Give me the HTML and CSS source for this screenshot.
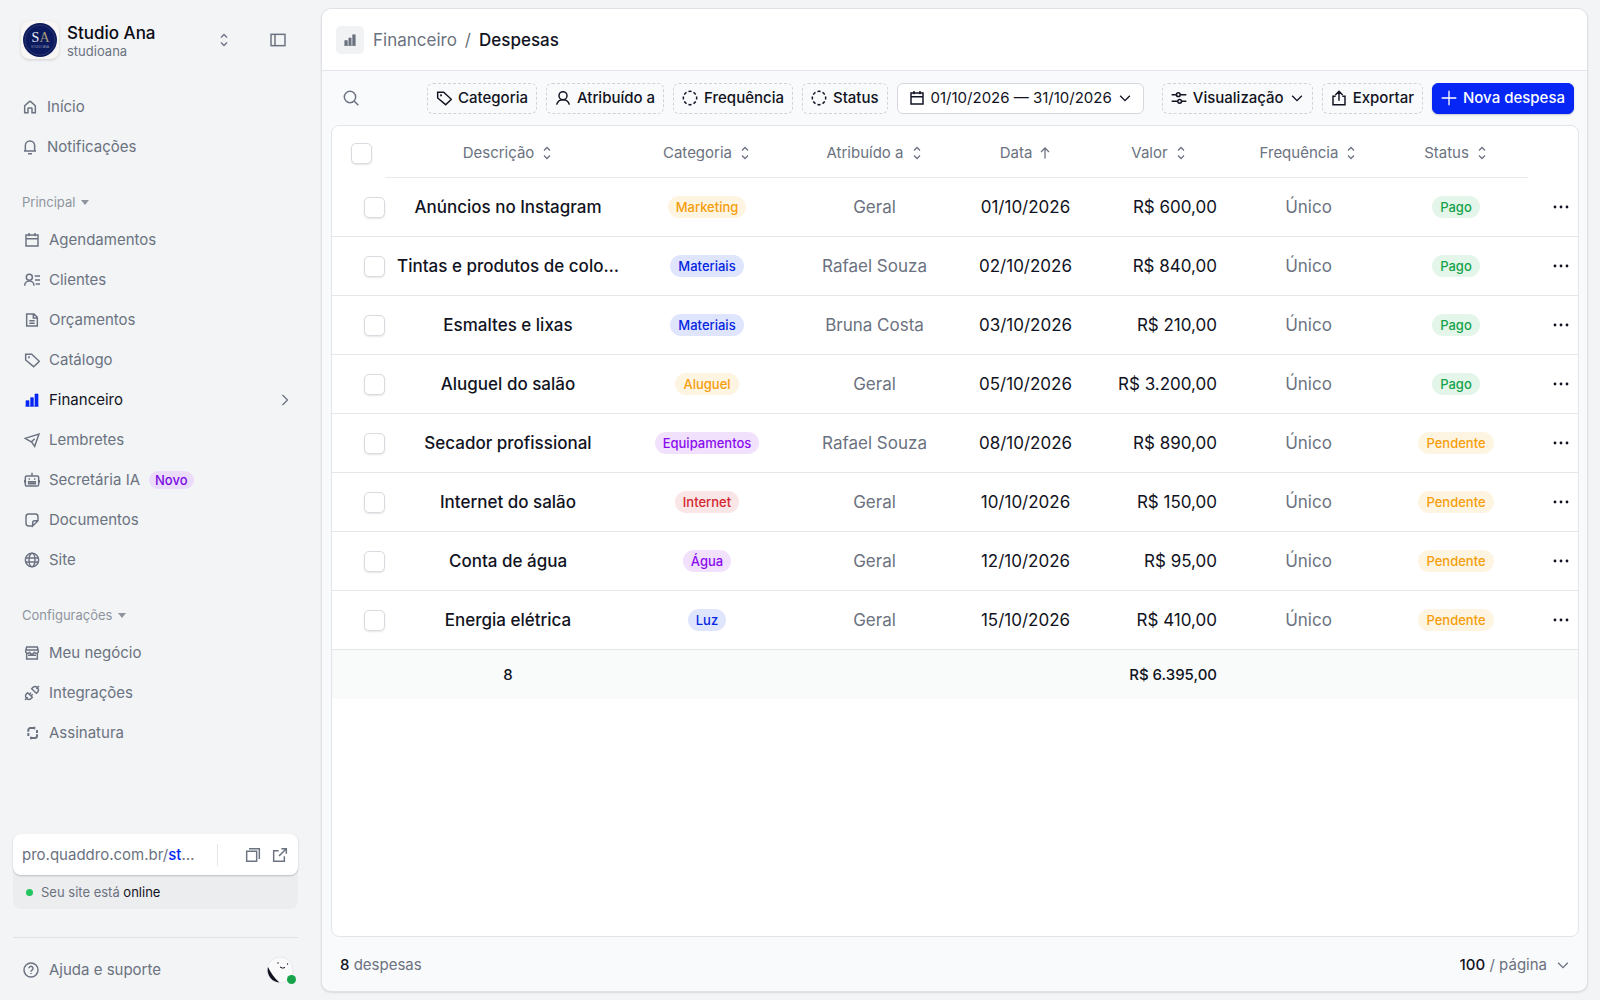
FILE: index.html
```html
<!DOCTYPE html>
<html lang="pt-BR">

<head>
  <meta charset="UTF-8" />
  <meta name="viewport" content="width=device-width, initial-scale=1" />
  <title>Despesas - Studio Ana</title>
  <link rel="stylesheet" href="styles.css">
</head>

<body>
  <svg class="sprite" aria-hidden="true">
    <symbol id="i-home" viewBox="0 0 24 24"><path d="M4 20.5V10.2l7-6.3q1-.9 2 0l7 6.3v10.3h-5V14.5a1 1 0 0 0-1-1h-4a1 1 0 0 0-1 1v6z" /></symbol>
    <symbol id="i-bell" viewBox="0 0 24 24"><path d="M3 18h18M5 18v-8a7 7 0 0 1 14 0v8M9 22h6" /></symbol>
    <symbol id="i-calendar" viewBox="0 0 24 24"><path d="M3 4.5h18V21H3zM3 10h18M7.5 1.5v5M16.5 1.5v5" /></symbol>
    <symbol id="i-contacts" viewBox="0 0 24 24"><circle cx="8" cy="8" r="4.5" /><path d="M1 20.5c0-4 3-7 7-7s7 3 7 7M16 6h8M16.500 12H24M17.500 18H24" /></symbol>
    <symbol id="i-file" viewBox="0 0 24 24"><path d="M4 3h11l5 5v13H4zM14 3v6h6M8 13h8M8 17h8" /></symbol>
    <symbol id="i-tag" viewBox="0 0 24 24"><path d="M2.500 3.500h9L23 14l-8.500 8L2.500 12z" /><circle cx="7.500" cy="8" r=".6" /></symbol>
    <symbol id="i-bars" viewBox="0 0 24 24"><path d="M2 21.500h20M3 21V13h4.500v8zM10 21V8.500h4V21zM16.500 21V3H21v18z" fill="currentColor" stroke-width="1" /></symbol>
    <symbol id="i-send" viewBox="0 0 24 24"><path d="M1.500 9.500 22.500 3l-6.500 18.500-4.500-6.500zM11 15l5-5" /></symbol>
    <symbol id="i-bot" viewBox="0 0 24 24"><rect x="2" y="6" width="20" height="15" rx="2" /><path d="M12 1v5M7 14.500h10v3H7zM0.800 12v4M23.200 12v4M10.500 15v2M13.500 15v2" /><path d="M8 9.500v2M16 9.500v2" /></symbol>
    <symbol id="i-note" viewBox="0 0 24 24"><path d="M13 21H7a4 4 0 0 1-4-4V7a4 4 0 0 1 4-4h10a4 4 0 0 1 4 4v6l-8 8v-5a3 3 0 0 1 3-3h5" /></symbol>
    <symbol id="i-globe" viewBox="0 0 24 24"><circle cx="12" cy="12" r="10" /><ellipse cx="12" cy="12" rx="4.500" ry="10" /><path d="M2.500 9h19M2.500 15h19" /></symbol>
    <symbol id="i-store" viewBox="0 0 24 24"><path d="M4 11v10h16V11M4 3h16l1.500 6a3 3 0 0 1-6 1 3.500 3.500 0 0 1-7 0 3 3 0 0 1-6-1zM3 7.500h18M6 15.500h12" /></symbol>
    <symbol id="i-plug" viewBox="0 0 24 24"><path d="M1.500 22.500l4-4M5.500 11.500l7 7-2 2a5 5 0 0 1-7-7zM22.500 1.500l-4 4M11.500 5.500l7 7 2-2a5 5 0 0 0-7-7zM8 14l2.500-2.500M10.500 16.500l2.500-2.500" /></symbol>
    <symbol id="i-loop" viewBox="0 0 24 24"><path d="M6.500 10V7.500a3 3 0 0 1 3-3H17M19.500 14v2.500a3 3 0 0 1-3 3H9M6.500 12v4.500M19.500 12V7.500M15.500 2.500v4M10.500 17.500v4" stroke-width="3" /></symbol>
    <symbol id="i-panel" viewBox="0 0 24 24"><rect x="1.500" y="3.500" width="21" height="17" /><path d="M7.500 3.500v17" /></symbol>
    <symbol id="i-sort" viewBox="0 0 12 16"><path d="M3 5.500l3-3 3 3M3 10.500l3 3 3-3" /></symbol>
    <symbol id="i-up" viewBox="0 0 12 16"><path d="M6 13.500V3M2 7l4-4 4 4" /></symbol>
    <symbol id="i-right" viewBox="0 0 12 16"><path d="M3.500 3l5 5-5 5" /></symbol>
    <symbol id="i-down" viewBox="0 0 16 16"><path d="M2.500 5.500 8 11l5.500-5.500" /></symbol>
    <symbol id="i-copy" viewBox="0 0 24 24"><path d="M2.500 6.500h15v15h-15zM6 2.500h15.500V18" /></symbol>
    <symbol id="i-external" viewBox="0 0 24 24"><path d="M10 5.500H2.500v16h16V14M14 2.500h7.500V10M21 3l-10.500 10.500" /></symbol>
    <symbol id="i-help" viewBox="0 0 24 24"><circle cx="12" cy="12" r="10.500" /><path d="M9 9.500a3 3 0 1 1 4.500 2.600c-1 .6-1.500 1.100-1.500 2.400M12 16.500v1.500" /></symbol>
    <symbol id="i-search" viewBox="0 0 24 24"><circle cx="10.500" cy="10.500" r="8.500" /><path d="M17 17l6 6" /></symbol>
    <symbol id="i-user" viewBox="0 0 24 24"><circle cx="12" cy="8.500" r="6" /><path d="M2.500 22c1-4.500 5-7.500 9.500-7.500s8.500 3 9.500 7.500" /></symbol>
    <symbol id="i-dashed" viewBox="0 0 24 24"><circle cx="12" cy="12" r="10" pathLength="80" stroke-dasharray="6 4" stroke-dashoffset="3" /></symbol>
    <symbol id="i-sliders" viewBox="0 0 24 24"><path d="M1 7h7M14 7h9M1 17h9M16 17h7" /><circle cx="11" cy="7" r="2.800" /><circle cx="13" cy="17" r="2.800" /></symbol>
    <symbol id="i-share" viewBox="0 0 24 24"><path d="M7 9.500H3V22h18V9.500h-4M12 16V2.500M6.500 7.500 12 2l5.500 5.500" /></symbol>
    <symbol id="i-plus" viewBox="0 0 24 24"><path d="M12 1v22M1 12h22" /></symbol>
    <symbol id="i-dots" viewBox="0 0 16 16"><g fill="currentColor" stroke="none"><circle cx="2" cy="8" r="1.400" /><circle cx="8" cy="8" r="1.400" /><circle cx="14" cy="8" r="1.400" /></g></symbol>
  </svg>

  <div class="app">
    <aside class="sidebar">
      <div class="brand">
        <div class="brand-logo">
          <svg viewBox="0 0 36 36" aria-hidden="true">
            <circle cx="18" cy="18" r="17" fill="#0b1a5e" />
            <circle cx="18" cy="18" r="15" fill="none" stroke="#3c4670" stroke-width=".6" />
            <text x="13.500" y="20" class="logo-s">S</text>
            <text x="22.500" y="20" class="logo-a">A</text>
            <text x="18" y="26" class="logo-tag">STUDIO ANA</text>
          </svg>
        </div>
        <div class="brand-text">
          <div class="brand-name">Studio Ana</div>
          <div class="brand-user">studioana</div>
        </div>
        <button type="button" class="plain" aria-label="Trocar negócio"><svg class="icon sort"><use href="#i-sort" /></svg></button>
        <button type="button" class="plain collapse" aria-label="Recolher menu"><svg class="icon"><use href="#i-panel" /></svg></button>
      </div>

      <nav class="menu top">
        <a href="#"><svg class="icon"><use href="#i-home" /></svg>Início</a>
        <a href="#"><svg class="icon"><use href="#i-bell" /></svg>Notificações</a>
      </nav>

      <button type="button" class="group">Principal <span class="caret"></span></button>
      <nav class="menu">
        <a href="#"><svg class="icon"><use href="#i-calendar" /></svg>Agendamentos</a>
        <a href="#"><svg class="icon"><use href="#i-contacts" /></svg>Clientes</a>
        <a href="#"><svg class="icon"><use href="#i-file" /></svg>Orçamentos</a>
        <a href="#"><svg class="icon"><use href="#i-tag" /></svg>Catálogo</a>
        <a href="#" class="active"><svg class="icon"><use href="#i-bars" /></svg>Financeiro<svg class="icon sort chevron"><use href="#i-right" /></svg></a>
        <a href="#"><svg class="icon"><use href="#i-send" /></svg>Lembretes</a>
        <a href="#"><svg class="icon"><use href="#i-bot" /></svg>Secretária IA<span class="new">Novo</span></a>
        <a href="#"><svg class="icon"><use href="#i-note" /></svg>Documentos</a>
        <a href="#"><svg class="icon"><use href="#i-globe" /></svg>Site</a>
      </nav>

      <button type="button" class="group">Configurações <span class="caret"></span></button>
      <nav class="menu">
        <a href="#"><svg class="icon"><use href="#i-store" /></svg>Meu negócio</a>
        <a href="#"><svg class="icon"><use href="#i-plug" /></svg>Integrações</a>
        <a href="#"><svg class="icon"><use href="#i-loop" /></svg>Assinatura</a>
      </nav>

      <div class="site">
        <div class="site-url">
          <a href="#">pro.quaddro.com.br/<span>st</span>…</a>
          <span class="sep"></span>
          <button type="button" class="plain" aria-label="Copiar link"><svg class="icon"><use href="#i-copy" /></svg></button>
          <button type="button" class="plain" aria-label="Abrir site"><svg class="icon"><use href="#i-external" /></svg></button>
        </div>
        <div class="site-status"><span class="dot"></span><span>Seu site está <b>online</b></span></div>
      </div>

      <div class="help">
        <a href="#"><svg class="icon"><use href="#i-help" /></svg>Ajuda e suporte</a>
        <button type="button" class="plain avatar" aria-label="Minha conta">
          <svg viewBox="0 0 28 28" aria-hidden="true">
            <circle cx="14" cy="14" r="13" fill="#fafafa" stroke="#e8e9ec" />
            <path d="M2 11a12.500 12.500 0 0 0 11.500 15.500C8.500 22.500 5 17 2 11z" fill="#10121f" />
            <path d="M14 11q2.500 2 5 .5" fill="none" stroke="#10121f" />
            <circle cx="12" cy="7" r=".7" fill="#10121f" />
            <circle cx="21.500" cy="8" r=".7" fill="#10121f" />
          </svg>
          <span class="presence"></span>
        </button>
      </div>
    </aside>

    <main class="main">
      <header class="header">
        <span class="header-icon"><svg class="icon"><use href="#i-bars" /></svg></span>
        <a href="#">Financeiro</a>
        <span class="slash">/</span>
        <h1>Despesas</h1>
      </header>

      <div class="toolbar">
        <button type="button" class="plain search" aria-label="Buscar"><svg class="icon"><use href="#i-search" /></svg></button>
        <div class="filters">
          <button type="button" class="btn"><svg class="icon"><use href="#i-tag" /></svg>Categoria</button>
          <button type="button" class="btn"><svg class="icon"><use href="#i-user" /></svg>Atribuído a</button>
          <button type="button" class="btn"><svg class="icon"><use href="#i-dashed" /></svg>Frequência</button>
          <button type="button" class="btn"><svg class="icon"><use href="#i-dashed" /></svg>Status</button>
          <button type="button" class="btn period"><svg class="icon"><use href="#i-calendar" /></svg>01/10/2026 — 31/10/2026<svg class="icon small"><use href="#i-down" /></svg></button>
        </div>
        <div class="actions">
          <button type="button" class="btn"><svg class="icon"><use href="#i-sliders" /></svg>Visualização<svg class="icon small"><use href="#i-down" /></svg></button>
          <button type="button" class="btn"><svg class="icon"><use href="#i-share" /></svg>Exportar</button>
          <button type="button" class="btn primary"><svg class="icon"><use href="#i-plus" /></svg>Nova despesa</button>
        </div>
      </div>

      <div class="card">
        <table>
          <colgroup>
            <col class="c-check">
            <col>
            <col class="c-category">
            <col class="c-assigned">
            <col class="c-date">
            <col class="c-value">
            <col class="c-freq">
            <col class="c-status">
            <col class="c-more">
          </colgroup>
          <thead>
            <tr>
              <th class="check"><input type="checkbox" aria-label="Selecionar todas"></th>
              <th>Descrição<svg class="icon sort"><use href="#i-sort" /></svg></th>
              <th>Categoria<svg class="icon sort"><use href="#i-sort" /></svg></th>
              <th>Atribuído a<svg class="icon sort"><use href="#i-sort" /></svg></th>
              <th>Data<svg class="icon sort"><use href="#i-up" /></svg></th>
              <th>Valor<svg class="icon sort"><use href="#i-sort" /></svg></th>
              <th>Frequência<svg class="icon sort"><use href="#i-sort" /></svg></th>
              <th>Status<svg class="icon sort"><use href="#i-sort" /></svg></th>
              <th></th>
            </tr>
          </thead>
          <tbody>
            <tr>
              <td class="check"><input type="checkbox" aria-label="Anúncios no Instagram"></td>
              <td class="name">Anúncios no Instagram</td>
              <td><span class="pill orange">Marketing</span></td>
              <td class="muted">Geral</td>
              <td>01/10/2026</td>
              <td class="value">R$ 600,00</td>
              <td class="muted">Único</td>
              <td><span class="pill green">Pago</span></td>
              <td class="more"><button type="button" class="plain" aria-label="Mais opções"><svg class="icon"><use href="#i-dots" /></svg></button></td>
            </tr>
            <tr>
              <td class="check"><input type="checkbox" aria-label="Tintas e produtos"></td>
              <td class="name">Tintas e produtos de colo…</td>
              <td><span class="pill blue">Materiais</span></td>
              <td class="muted">Rafael Souza</td>
              <td>02/10/2026</td>
              <td class="value">R$ 840,00</td>
              <td class="muted">Único</td>
              <td><span class="pill green">Pago</span></td>
              <td class="more"><button type="button" class="plain" aria-label="Mais opções"><svg class="icon"><use href="#i-dots" /></svg></button></td>
            </tr>
            <tr>
              <td class="check"><input type="checkbox" aria-label="Esmaltes e lixas"></td>
              <td class="name">Esmaltes e lixas</td>
              <td><span class="pill blue">Materiais</span></td>
              <td class="muted">Bruna Costa</td>
              <td>03/10/2026</td>
              <td class="value">R$ 210,00</td>
              <td class="muted">Único</td>
              <td><span class="pill green">Pago</span></td>
              <td class="more"><button type="button" class="plain" aria-label="Mais opções"><svg class="icon"><use href="#i-dots" /></svg></button></td>
            </tr>
            <tr>
              <td class="check"><input type="checkbox" aria-label="Aluguel do salão"></td>
              <td class="name">Aluguel do salão</td>
              <td><span class="pill orange">Aluguel</span></td>
              <td class="muted">Geral</td>
              <td>05/10/2026</td>
              <td class="value">R$ 3.200,00</td>
              <td class="muted">Único</td>
              <td><span class="pill green">Pago</span></td>
              <td class="more"><button type="button" class="plain" aria-label="Mais opções"><svg class="icon"><use href="#i-dots" /></svg></button></td>
            </tr>
            <tr>
              <td class="check"><input type="checkbox" aria-label="Secador profissional"></td>
              <td class="name">Secador profissional</td>
              <td><span class="pill purple">Equipamentos</span></td>
              <td class="muted">Rafael Souza</td>
              <td>08/10/2026</td>
              <td class="value">R$ 890,00</td>
              <td class="muted">Único</td>
              <td><span class="pill orange">Pendente</span></td>
              <td class="more"><button type="button" class="plain" aria-label="Mais opções"><svg class="icon"><use href="#i-dots" /></svg></button></td>
            </tr>
            <tr>
              <td class="check"><input type="checkbox" aria-label="Internet do salão"></td>
              <td class="name">Internet do salão</td>
              <td><span class="pill red">Internet</span></td>
              <td class="muted">Geral</td>
              <td>10/10/2026</td>
              <td class="value">R$ 150,00</td>
              <td class="muted">Único</td>
              <td><span class="pill orange">Pendente</span></td>
              <td class="more"><button type="button" class="plain" aria-label="Mais opções"><svg class="icon"><use href="#i-dots" /></svg></button></td>
            </tr>
            <tr>
              <td class="check"><input type="checkbox" aria-label="Conta de água"></td>
              <td class="name">Conta de água</td>
              <td><span class="pill purple">Água</span></td>
              <td class="muted">Geral</td>
              <td>12/10/2026</td>
              <td class="value">R$ 95,00</td>
              <td class="muted">Único</td>
              <td><span class="pill orange">Pendente</span></td>
              <td class="more"><button type="button" class="plain" aria-label="Mais opções"><svg class="icon"><use href="#i-dots" /></svg></button></td>
            </tr>
            <tr>
              <td class="check"><input type="checkbox" aria-label="Energia elétrica"></td>
              <td class="name">Energia elétrica</td>
              <td><span class="pill blue">Luz</span></td>
              <td class="muted">Geral</td>
              <td>15/10/2026</td>
              <td class="value">R$ 410,00</td>
              <td class="muted">Único</td>
              <td><span class="pill orange">Pendente</span></td>
              <td class="more"><button type="button" class="plain" aria-label="Mais opções"><svg class="icon"><use href="#i-dots" /></svg></button></td>
            </tr>
          </tbody>
          <tfoot>
            <tr>
              <td></td>
              <td>8</td>
              <td colspan="3"></td>
              <td class="value">R$ 6.395,00</td>
              <td colspan="3"></td>
            </tr>
          </tfoot>
        </table>
      </div>

      <footer class="footer">
        <div><b>8</b> despesas</div>
        <div class="per-page">
          <select id="per-page">
            <option>50</option>
            <option selected>100</option>
            <option>200</option>
          </select>
          <label for="per-page">/ página</label>
          <svg class="icon small"><use href="#i-down" /></svg>
        </div>
      </footer>
    </main>
  </div>
</body>

</html>
```
FILE: styles.css
```css
* {
  box-sizing: border-box;
}

body {
  margin: 0;
  background: #f2f4f6;
  color: #111322;
  font-family: Inter, "Liberation Sans", sans-serif;
  font-size: 15px;
  line-height: 20px;
}

a {
  color: inherit;
  text-decoration: none;
}

b {
  font-weight: 500;
  color: #111322;
}

button,
select {
  font: inherit;
  color: inherit;
  cursor: pointer;
}

.sprite {
  display: none;
}

.icon {
  width: 16px;
  height: 16px;
  flex: none;
  fill: none;
  stroke: currentColor;
  stroke-width: 2.2;
}

.icon.sort {
  width: 12px;
  stroke-width: 1.3;
}

.icon.small {
  width: 14px;
  height: 14px;
  stroke-width: 1.6;
}

.plain {
  display: flex;
  padding: 0;
  border: 0;
  background: none;
  color: #6b7280;
}

.app {
  display: flex;
  min-height: 100vh;
}

/* sidebar */
.sidebar {
  width: 321px;
  flex: none;
  display: flex;
  flex-direction: column;
  padding: 20px 23px 16px 13px;
  color: #6b7280;
}

.brand {
  display: flex;
  align-items: center;
  height: 40px;
  padding: 0 12px 0 8px;
}

.brand-logo {
  width: 38px;
  height: 38px;
  padding: 1px;
  border-radius: 8px;
  background: #f8f5f5;
  box-shadow: 0 1px 3px rgba(0, 0, 0, 0.15);
}

.brand-logo svg {
  display: block;
}

.logo-s,
.logo-a {
  font: 14px "Liberation Serif", serif;
  text-anchor: middle;
  fill: #e9ebf2;
}

.logo-a {
  fill: #a89d78;
}

.logo-tag {
  font: 3px "Liberation Sans", sans-serif;
  text-anchor: middle;
  fill: #8c92b0;
}

.brand-text {
  flex: 1;
  margin-left: 8px;
  padding-top: 2px;
}

.brand-name {
  font-size: 17px;
  font-weight: 500;
  line-height: 20px;
  color: #0b0b14;
}

.brand-user {
  font-size: 13px;
  line-height: 16px;
}

.collapse {
  margin-left: 40px;
}

.menu a {
  display: flex;
  align-items: center;
  gap: 9px;
  height: 40px;
  padding: 0 7px 0 11px;
}

.menu.top {
  margin-top: 27px;
}

.menu.top a {
  padding-left: 9px;
}

.menu .active {
  color: #111322;
}

.menu .active .icon {
  color: #0526f5;
}

.menu .active .chevron {
  margin-left: auto;
  color: #6b7280;
}

.new {
  height: 18px;
  padding: 0 6px;
  border-radius: 9px;
  background: #ecdcfb;
  color: #7a0be0;
  font-size: 13px;
  font-weight: 500;
  line-height: 18px;
}

.group {
  display: flex;
  align-items: center;
  gap: 6px;
  margin: 25px 0 8px;
  padding: 0 9px;
  border: 0;
  background: none;
  color: #8f949e;
  font-size: 13px;
  line-height: 20px;
}

.caret {
  border: 4px solid transparent;
  border-top: 5px solid #8f949e;
  border-bottom: 0;
}

.site {
  margin-top: auto;
  border-radius: 8px;
  background: #ecedef;
}

.site-url {
  display: flex;
  align-items: center;
  gap: 11px;
  height: 41px;
  padding: 0 10px 0 9px;
  border-radius: 8px;
  background: #fff;
  box-shadow: 0 1px 2px rgba(0, 0, 0, 0.2);
}

.site-url a {
  white-space: nowrap;
}

.site-url a span {
  color: #0526f5;
  font-weight: 500;
}

.sep {
  width: 1px;
  height: 22px;
  margin: 0 16px 0 auto;
  background: #e5e7eb;
}

.site-status {
  display: flex;
  align-items: center;
  gap: 8px;
  height: 34px;
  padding: 0 13px;
  font-size: 13px;
}

.site-status b {
  font-weight: 400;
}

.dot {
  width: 7px;
  height: 7px;
  border-radius: 50%;
  background: #22c55e;
}

.help {
  display: flex;
  align-items: center;
  justify-content: space-between;
  margin-top: 28px;
  padding: 18px 4px 0 10px;
  border-top: 1px solid #dfe1e5;
}

.help a {
  display: flex;
  align-items: center;
  gap: 10px;
}

.avatar {
  position: relative;
  width: 28px;
  height: 28px;
}

.presence {
  position: absolute;
  right: -2px;
  bottom: 0;
  width: 9px;
  height: 9px;
  border-radius: 50%;
  background: #16a34a;
}

/* main panel */
.main {
  flex: 1;
  min-width: 0;
  display: flex;
  flex-direction: column;
  margin: 8px 12px 8px 0;
  border: 1px solid #dfe1e6;
  border-radius: 10px;
  background: #f9fafc;
  box-shadow: 0 1px 2px rgba(0, 0, 0, 0.1);
}

.header {
  display: flex;
  align-items: center;
  height: 62px;
  padding: 0 14px;
  border-bottom: 1px solid #e2e5e9;
  border-radius: 10px 10px 0 0;
  background: #fff;
  color: #6b7280;
  font-size: 17px;
}

.header-icon {
  display: grid;
  place-items: center;
  width: 28px;
  height: 28px;
  margin-right: 9px;
  border-radius: 5px;
  background: #f1f2f3;
}

.header-icon .icon {
  width: 14px;
}

.slash {
  margin: 0 8px;
}

.header h1 {
  margin: 0;
  color: #111322;
  font-size: 17px;
  font-weight: 500;
}

.toolbar {
  display: flex;
  align-items: center;
  gap: 18px;
  height: 54px;
  padding: 0 13px 0 21px;
}

.filters,
.actions {
  display: flex;
  gap: 9px;
}

.filters {
  margin-left: auto;
}

.btn {
  display: flex;
  align-items: center;
  gap: 6px;
  height: 31px;
  padding: 0 8px;
  border: 1px dashed #cfd3d9;
  border-radius: 6px;
  background: none;
  font-size: 15px;
  font-weight: 500;
  white-space: nowrap;
}

.period {
  padding: 0 11px;
  border: 1px solid #d5d8dd;
  background: #fff;
  font-weight: 400;
}

.primary {
  border: 1px solid #0526f5;
  background: #0526f5;
  color: #fff;
  box-shadow: 0 1px 2px rgba(0, 0, 0, 0.2);
}

.primary .icon {
  stroke-width: 2;
}

.card {
  flex: 1;
  margin: 0 8px 0 9px;
  border: 1px solid #e2e5e9;
  border-radius: 8px;
  background: #fff;
  overflow: hidden;
}

/* table */
table {
  width: 100%;
  table-layout: fixed;
  border-spacing: 0;
  font-size: 17px;
}

.c-check {
  width: 53px;
}

.c-category {
  width: 152px;
}

.c-assigned {
  width: 183px;
}

.c-date {
  width: 119px;
}

.c-value {
  width: 148px;
}

.c-freq {
  width: 151px;
}

.c-status {
  width: 144px;
}

.c-more {
  width: 50px;
}

th,
td {
  padding: 0;
  text-align: center;
  white-space: nowrap;
}

th {
  height: 52px;
  padding-top: 2px;
  border-bottom: 1px solid #e8eaed;
  color: #6b7280;
  font-size: 15px;
  font-weight: 400;
}

th:first-child,
th:last-child {
  border-bottom: 0;
}

th .icon {
  margin-left: 7px;
  vertical-align: -3px;
}

td {
  height: 59px;
  border-bottom: 1px solid #e5e7ea;
}

.check input {
  display: block;
  appearance: none;
  width: 21px;
  height: 21px;
  margin: 0 auto 0 19px;
  border: 1px solid #d9dbe0;
  border-radius: 5px;
  background: #fff;
  box-shadow: 0 1px 2px rgba(0, 0, 0, 0.1);
}

td.check input {
  margin-left: 32px;
}

.name {
  padding: 0 12px;
  font-weight: 500;
  overflow: hidden;
  text-overflow: ellipsis;
}

.muted {
  color: #6b7280;
}

.value {
  padding-right: 16px;
  text-align: right;
}

.more .plain {
  margin: 0 9px 0 auto;
  color: #111322;
}

.pill {
  display: inline-block;
  height: 22px;
  padding: 0 8px;
  border-radius: 11px;
  font-size: 13px;
  font-weight: 500;
  line-height: 22px;
  vertical-align: middle;
}

.orange {
  background: #fef4e2;
  color: #f59e0b;
}

.blue {
  background: #e0e5fe;
  color: #0526e0;
}

.purple {
  background: #f1e1fd;
  color: #8b0bef;
}

.red {
  background: #fbe6e7;
  color: #d3262f;
}

.green {
  background: #e4f5ea;
  color: #16a34a;
}

tfoot td {
  height: 49px;
  border: 0;
  background: #f9fbfb;
  font-size: 15px;
  font-weight: 500;
}

.footer {
  display: flex;
  align-items: center;
  justify-content: space-between;
  height: 54px;
  padding: 2px 15px 0 18px;
  color: #6b7280;
}

.per-page {
  display: flex;
  align-items: center;
}

.per-page select {
  appearance: none;
  width: 30px;
  padding: 0;
  border: 0;
  background: none;
  color: #111322;
  font-weight: 500;
}

.per-page .icon {
  margin: 0 2px 0 9px;
}
```
